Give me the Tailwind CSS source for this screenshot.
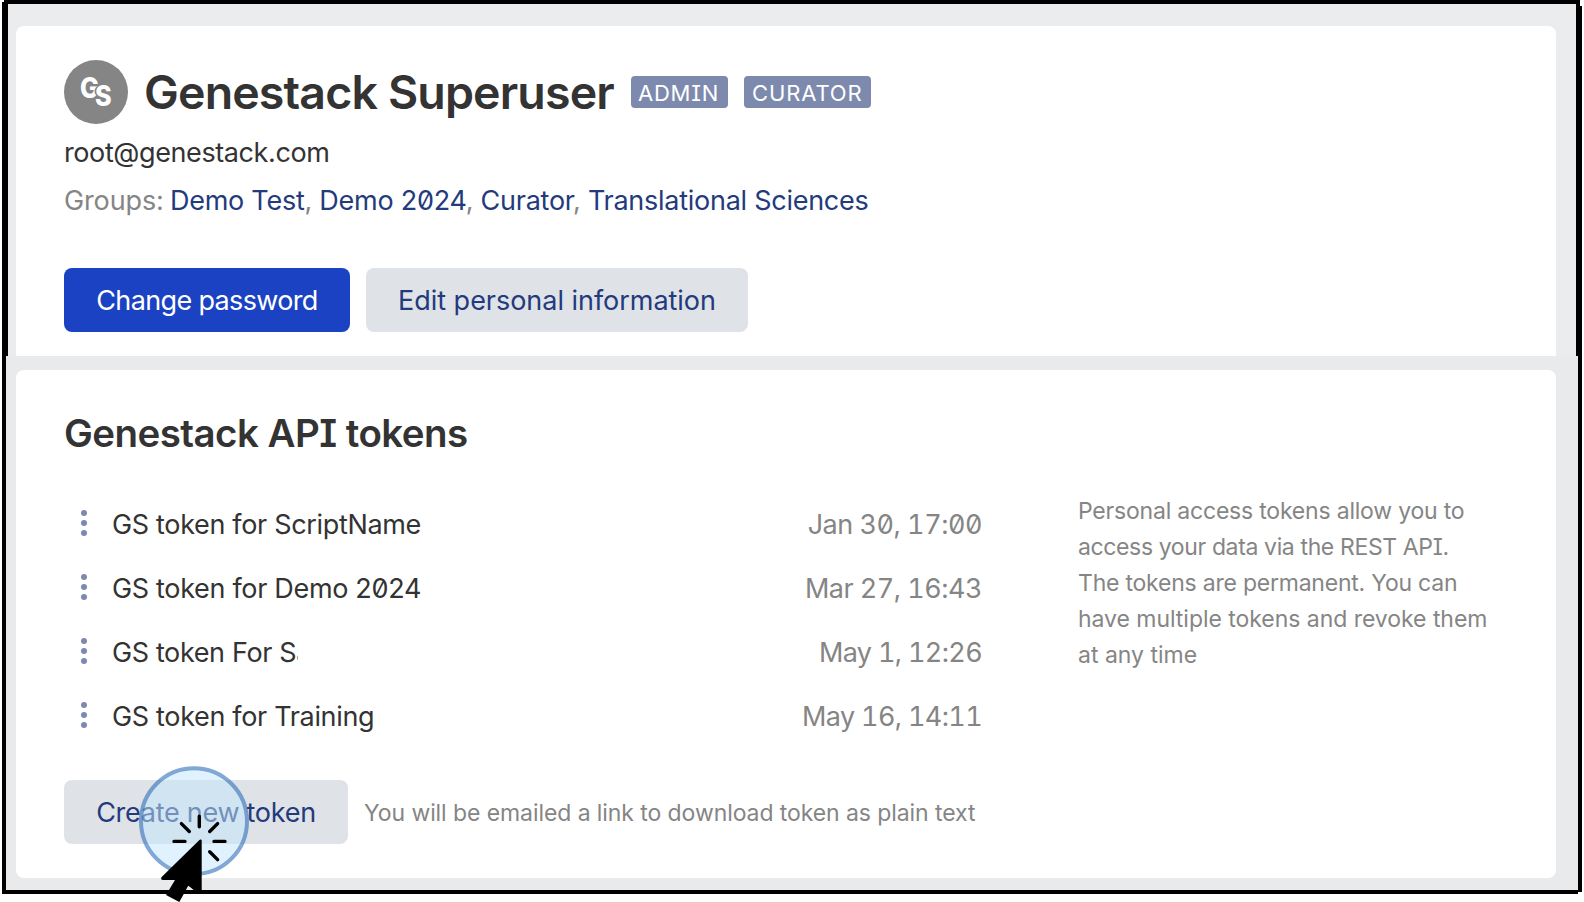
<!DOCTYPE html>
<html lang="en">
<head>
<meta charset="utf-8">
<title>Genestack profile</title>
<script src="https://cdn.jsdelivr.net/npm/@tailwindcss/browser@4"></script>
</head>
<body class="relative h-[902px] w-[1584px] overflow-hidden bg-white font-['Inter','Roboto',sans-serif] text-[27px] text-[#333333] [font-feature-settings:'zero','cv08']">

<!-- Profile -->
<section class="ml-[2px] h-[356px] w-[1580px] border-x-6 border-t-4 border-black bg-[#ebecee] px-2 pt-[22px]">
  <div class="mr-3 h-[330px] rounded-t-lg bg-white pl-12 pt-[34px]">
    <div class="flex h-16 items-center whitespace-nowrap">
      <div class="flex size-16 shrink-0 items-center justify-center rounded-full bg-[#858585] text-[28px] leading-none font-extrabold text-white">
        <span class="-mt-2 inline-block w-[15px] tracking-tight"><span class="inline-block origin-left scale-x-90">G</span></span><span class="mt-2 inline-block w-[17px] [text-shadow:-1px_0_#858585,-2px_0_#858585]"><span class="inline-block origin-left scale-x-90">S</span></span>
      </div>
      <h1 class="ml-4 w-[487px] text-[46.5px] leading-[60px] font-semibold tracking-[-0.85px]">Genestack Superuser</h1>
      <span class="h-8 w-[97px] rounded bg-[#7d8aae] pl-[7px] pt-px text-[22px] leading-[33px] tracking-[0.75px] text-white">ADMIN</span>
      <span class="ml-4 h-8 w-[127px] rounded bg-[#7d8aae] pl-2 pt-px text-[22px] leading-[33px] tracking-[0.87px] text-white">CURATOR</span>
    </div>
    <p class="mt-[5px] leading-12 tracking-[-0.4px]">root@genestack.com</p>
    <p class="flex leading-12 whitespace-nowrap text-[#858585]"><span class="w-[106px] tracking-[-0.13px]">Groups:</span><span class="tracking-[-0.26px]"><a class="text-[#233b7d]">Demo Test</a>, <a class="text-[#233b7d]">Demo 2024</a>, <a class="text-[#233b7d]">Curator</a>, <a class="text-[#233b7d]">Translational Sciences</a></span></p>
    <div class="mt-[43px] flex gap-4">
      <button class="h-16 w-[286px] rounded-lg bg-[#1b42c3] pt-0.5 tracking-[-0.65px] text-white">Change password</button>
      <button class="h-16 w-[382px] rounded-lg bg-[#dfe2e7] pt-0.5 tracking-[-0.03px] text-[#233b7d]">Edit personal information</button>
    </div>
  </div>
</section>

<!-- API tokens -->
<section class="ml-[2px] h-[538px] w-[1580px] border-x-4 border-b-4 border-black bg-[#e9eaec] px-[10px] pt-[14px]">
  <div class="mr-[12px] h-[508px] rounded-lg bg-white pl-12 pt-[39px]">
    <h2 class="text-[38.5px] leading-12 font-semibold tracking-[-0.55px]">Genestack API tokens</h2>
    <div class="mt-9 flex">
      <ul class="w-[917px]">
        <li class="flex h-16 items-center whitespace-nowrap">
          <svg class="-mt-1 ml-4 mr-6 h-[26px] w-2 fill-[#7d8aae]" viewBox="0 0 8 26"><circle cx="4" cy="3" r="3"/><circle cx="4" cy="13" r="3"/><circle cx="4" cy="23" r="3"/></svg>
          <span class="tracking-[-0.33px]">GS token for ScriptName</span>
          <span class="-mr-px ml-auto tracking-[-0.48px] text-[#858585] [font-feature-settings:'zero','tnum']">Jan 30, 17:00</span>
        </li>
        <li class="flex h-16 items-center whitespace-nowrap">
          <svg class="-mt-1 ml-4 mr-6 h-[26px] w-2 fill-[#7d8aae]" viewBox="0 0 8 26"><circle cx="4" cy="3" r="3"/><circle cx="4" cy="13" r="3"/><circle cx="4" cy="23" r="3"/></svg>
          <span class="tracking-[-0.32px]">GS token for Demo 2024</span>
          <span class="-mr-px ml-auto tracking-[-0.52px] text-[#858585] [font-feature-settings:'zero','tnum']">Mar 27, 16:43</span>
        </li>
        <li class="flex h-16 items-center whitespace-nowrap">
          <svg class="-mt-1 ml-4 mr-6 h-[26px] w-2 fill-[#7d8aae]" viewBox="0 0 8 26"><circle cx="4" cy="3" r="3"/><circle cx="4" cy="13" r="3"/><circle cx="4" cy="23" r="3"/></svg>
          <span class="w-[186px] overflow-hidden tracking-[-0.38px]">GS token For Sa</span>
          <span class="-mr-px ml-auto tracking-[-0.65px] text-[#858585] [font-feature-settings:'zero','tnum']">May 1, 12:26</span>
        </li>
        <li class="flex h-16 items-center whitespace-nowrap">
          <svg class="-mt-1 ml-4 mr-6 h-[26px] w-2 fill-[#7d8aae]" viewBox="0 0 8 26"><circle cx="4" cy="3" r="3"/><circle cx="4" cy="13" r="3"/><circle cx="4" cy="23" r="3"/></svg>
          <span class="tracking-[-0.33px]">GS token for Training</span>
          <span class="-mr-px ml-auto tracking-[-0.65px] text-[#858585] [font-feature-settings:'zero','tnum']">May 16, 14:11</span>
        </li>
      </ul>
      <p class="ml-[97px] text-[23px] leading-9 whitespace-nowrap text-[#858585]"><span class="tracking-[-0.2px]">Personal access tokens allow you to</span><br><span class="tracking-[-0.37px]">access your data via the REST API.</span><br><span class="tracking-[-0.22px]">The tokens are permanent. You can</span><br><span class="tracking-[-0.04px]">have multiple tokens and revoke them</span><br>at any time</p>
    </div>
    <div class="mt-[31px] flex items-center">
      <button class="h-16 w-[284px] rounded-lg bg-[#dfe2e7] pt-0.5 tracking-[-0.27px] text-[#233b7d]">Create new token</button>
      <p class="ml-4 pt-0.5 text-[23px] tracking-[-0.08px] text-[#858585]">You will be emailed a link to download token as plain text</p>
    </div>
  </div>
</section>

<!-- Frame corners -->
<i class="absolute left-[2px] top-0 size-[2px] bg-white"></i>
<i class="absolute left-[1580px] top-0 h-[6px] w-[2px] bg-white"></i>
<i class="absolute left-[1578px] top-[892px] h-[2px] w-1 bg-white"></i>

<!-- Click pointer -->
<svg class="absolute left-[130px] top-[760px]" width="130" height="142" viewBox="130 760 130 142">
  <circle cx="194" cy="821.2" r="52" fill="#c1e5fb" fill-opacity=".5"/>
  <circle cx="194" cy="821.2" r="53" fill="none" stroke="#306ebb" stroke-opacity=".6" stroke-width="4"/>
  <path d="M199.3 816.2v10.6M181.4 823.6l7.9 7.9M217.6 823.6l-7.9 7.9M174 841.4h11M214 841.4h11M209.7 851.7l7.9 7.9" fill="none" stroke="#000" stroke-width="3.4" stroke-linecap="round"/>
  <path d="M201.7 841a1.3 1.3 0 0 0-2.3-1l-38 37.3q-1 2.4 1.5 2.7h12.1l-9 15 13.3 7 9-16.3 10 8 3.4-1.5z" fill="#000"/>
  <path d="M188.3 886l-2 4h7z" fill="#e9eaec"/>
</svg>
</body>
</html>
